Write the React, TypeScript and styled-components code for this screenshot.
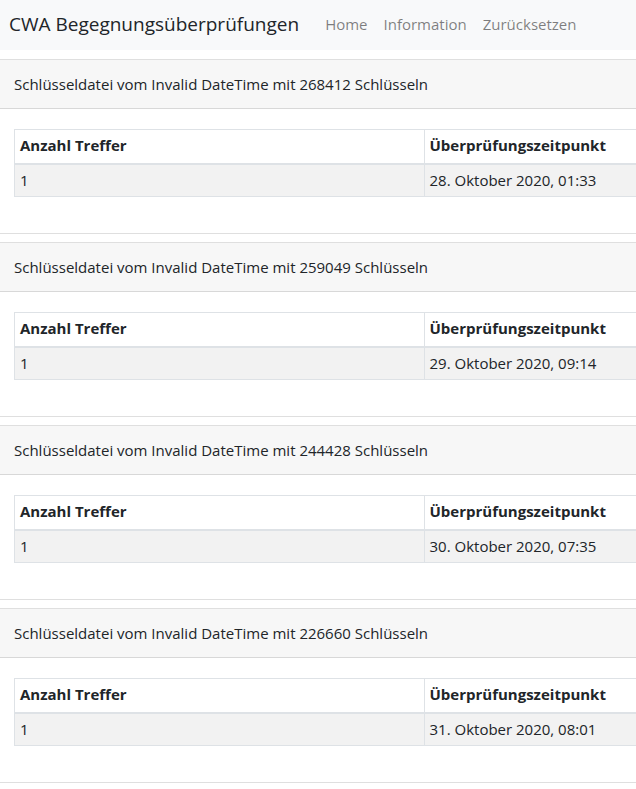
import styled, { createGlobalStyle } from 'styled-components';

const FILES = [
	{ keys: 268412, checkedAt: '28. Oktober 2020, 01:33', hits: 1 },
	{ keys: 259049, checkedAt: '29. Oktober 2020, 09:14', hits: 1 },
	{ keys: 244428, checkedAt: '30. Oktober 2020, 07:35', hits: 1 },
	{ keys: 226660, checkedAt: '31. Oktober 2020, 08:01', hits: 1 },
];

const NAV_LINKS = ['Home', 'Information', 'Zurücksetzen'];

export default function App() {
	return (
		<>
			<GlobalStyle />
			<Navbar>
				<Brand>CWA Begegnungsüberprüfungen</Brand>
				<NavList>
					{NAV_LINKS.map((link) => (
						<NavLink key={link}>{link}</NavLink>
					))}
				</NavList>
			</Navbar>
			<Main>
				{FILES.map((file) => (
					<Card key={file.keys}>
						<CardHeader>
							Schlüsseldatei vom Invalid DateTime mit {file.keys} Schlüsseln
						</CardHeader>
						<CardBody>
							<Table>
								<thead>
									<tr>
										<HeadCell>Anzahl Treffer</HeadCell>
										<HeadCell>Überprüfungszeitpunkt</HeadCell>
									</tr>
								</thead>
								<tbody>
									<StripedRow>
										<Cell>{file.hits}</Cell>
										<Cell>{file.checkedAt}</Cell>
									</StripedRow>
								</tbody>
							</Table>
						</CardBody>
					</Card>
				))}
			</Main>
		</>
	);
}

const GlobalStyle = createGlobalStyle`
	html, body {
		margin: 0;
		padding: 0;
		overflow-x: hidden;
		background: #fff;
	}
	body {
		font-family: 'Open Sans', 'Noto Sans', sans-serif;
		font-size: 15px;
		color: #212529;
	}
`;

const Navbar = styled.nav`
	display: flex;
	align-items: center;
	height: 50px;
	padding: 0 9px 3px;
	background: #f8f9fa;
	box-sizing: border-box;
`;

const Brand = styled.a`
	font-size: 19px;
	color: #212529;
	margin-right: 26px;
	white-space: nowrap;
`;

const NavList = styled.div`
	display: flex;
	gap: 16px;
`;

const NavLink = styled.a`
	color: rgba(0, 0, 0, 0.5);
	font-size: 15px;
	white-space: nowrap;
`;

const Main = styled.main`
	display: flex;
	flex-direction: column;
	gap: 8px;
	padding-top: 9px;
	margin-left: -7px;
	overflow: hidden;
`;

const Card = styled.section`
	flex-shrink: 0;
	width: 860px;
	border: 1px solid rgba(0, 0, 0, 0.125);
	background: #fff;
`;

const CardHeader = styled.header`
	height: 48px;
	display: flex;
	align-items: center;
	padding: 0 20px;
	background: rgba(0, 0, 0, 0.03);
	border-bottom: 1px solid rgba(0, 0, 0, 0.125);
`;

const CardBody = styled.div`
	padding: 20px 20px 36px;
`;

const Table = styled.table`
	border-collapse: collapse;
	table-layout: fixed;
	width: 820px;
`;

const HeadCell = styled.th`
	width: 50%;
	text-align: left;
	font-weight: 700;
	height: 34px;
	padding: 0 5px 2px;
	border: 1px solid #dee2e6;
	border-bottom-width: 2px;
	box-sizing: border-box;
`;

const StripedRow = styled.tr`
	background: rgba(0, 0, 0, 0.05);
`;

const Cell = styled.td`
	height: 33px;
	padding: 0 5px 1px;
	border: 1px solid #dee2e6;
	box-sizing: border-box;
`;
